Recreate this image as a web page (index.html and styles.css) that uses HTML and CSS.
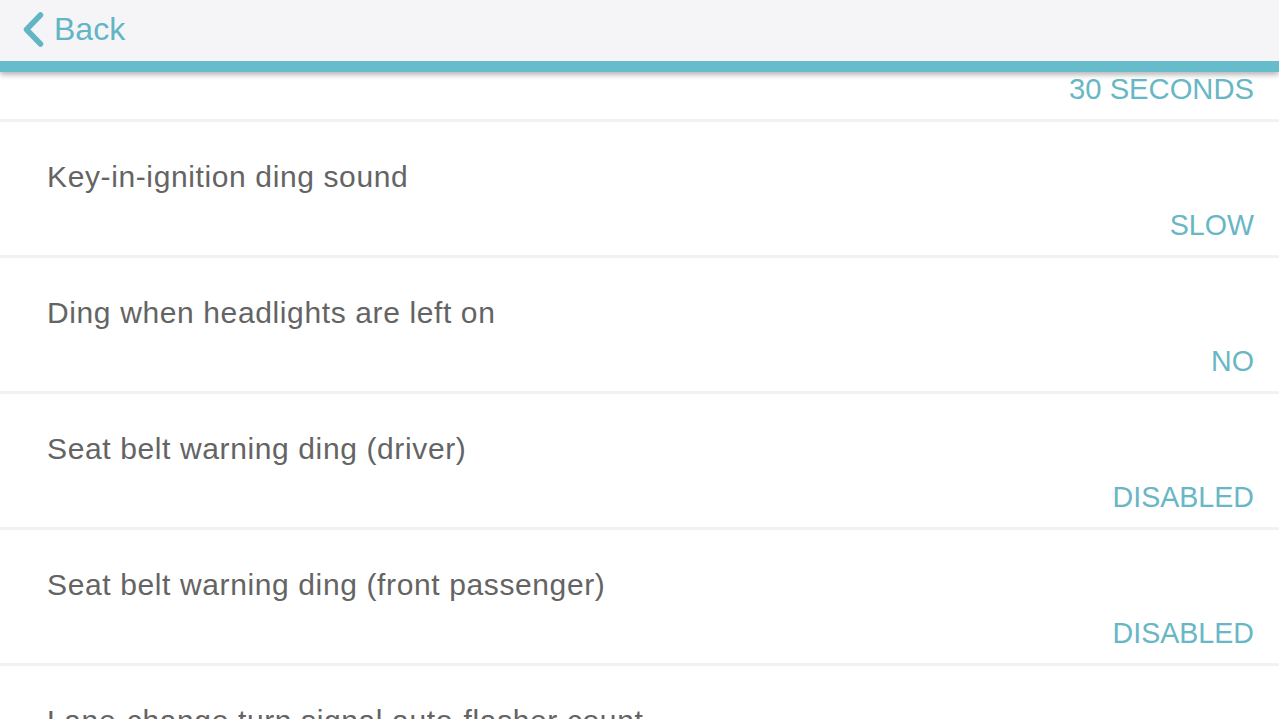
FILE: index.html
```html
<!DOCTYPE html>
<html>
<head>
<meta charset="utf-8">
<link rel="stylesheet" href="styles.css">
</head>
<body>
<div class="app">
  <header class="topbar">
    <div class="nav">
      <a class="back">
        <svg class="chev" width="24" height="36" viewBox="0 0 24 36"><path d="M19.5 3 L5.5 17.5 L19.5 32" fill="none" stroke="#62b5c4" stroke-width="5.5" stroke-linecap="round" stroke-linejoin="round"/></svg>
        <span>Back</span>
      </a>
    </div>
    <div class="accent"></div>
  </header>
  <main class="content">
    <div class="list">
      <div class="row partial">
        <div class="value">30 SECONDS</div>
      </div>
      <div class="row">
        <div class="title">Key-in-ignition ding sound</div>
        <div class="value">SLOW</div>
      </div>
      <div class="row">
        <div class="title">Ding when headlights are left on</div>
        <div class="value">NO</div>
      </div>
      <div class="row">
        <div class="title">Seat belt warning ding (driver)</div>
        <div class="value">DISABLED</div>
      </div>
      <div class="row">
        <div class="title">Seat belt warning ding (front passenger)</div>
        <div class="value">DISABLED</div>
      </div>
      <div class="row">
        <div class="title">Lane-change turn signal auto-flasher count</div>
        <div class="value">3</div>
      </div>
    </div>
  </main>
</div>
</body>
</html>
```
FILE: styles.css
```css
html, body {
  margin: 0;
  padding: 0;
  height: 100%;
  overflow: hidden;
  background: #ffffff;
  font-family: "Liberation Sans", Arial, sans-serif;
}
.app {
  display: flex;
  flex-direction: column;
  height: 719px;
}
.topbar {
  position: relative;
  z-index: 2;
  flex: 0 0 auto;
  box-shadow: 0 3px 5px rgba(0, 0, 0, 0.28);
}
.nav {
  height: 61px;
  background: #f5f5f7;
  display: flex;
  align-items: center;
  padding-left: 21px;
}
.back {
  display: flex;
  align-items: center;
  gap: 9px;
  color: #62b5c4;
  font-size: 32px;
  margin-top: -2px;
}
.chev {
  display: block;
}
.accent {
  height: 11px;
  background: #67bccb;
}
.content {
  flex: 1 1 auto;
  overflow: hidden;
  background: #f2f2f2;
}
.list {
  display: flex;
  flex-direction: column;
  gap: 3px;
}
.row {
  height: 133px;
  box-sizing: border-box;
  background: #ffffff;
  padding: 37px 25px 0 47px;
  display: flex;
  flex-direction: column;
}
.row.partial {
  height: 47px;
  padding: 0 25px 12px 47px;
  justify-content: flex-end;
}
.row.partial .value {
  margin-top: 0;
  font-size: 29.2px;
}
.title {
  font-size: 30px;
  line-height: 36px;
  letter-spacing: 0.62px;
  color: #646464;
}
.value {
  margin-top: 12px;
  font-size: 28.6px;
  line-height: 36px;
  color: #68b7c5;
  text-align: right;
}
```
